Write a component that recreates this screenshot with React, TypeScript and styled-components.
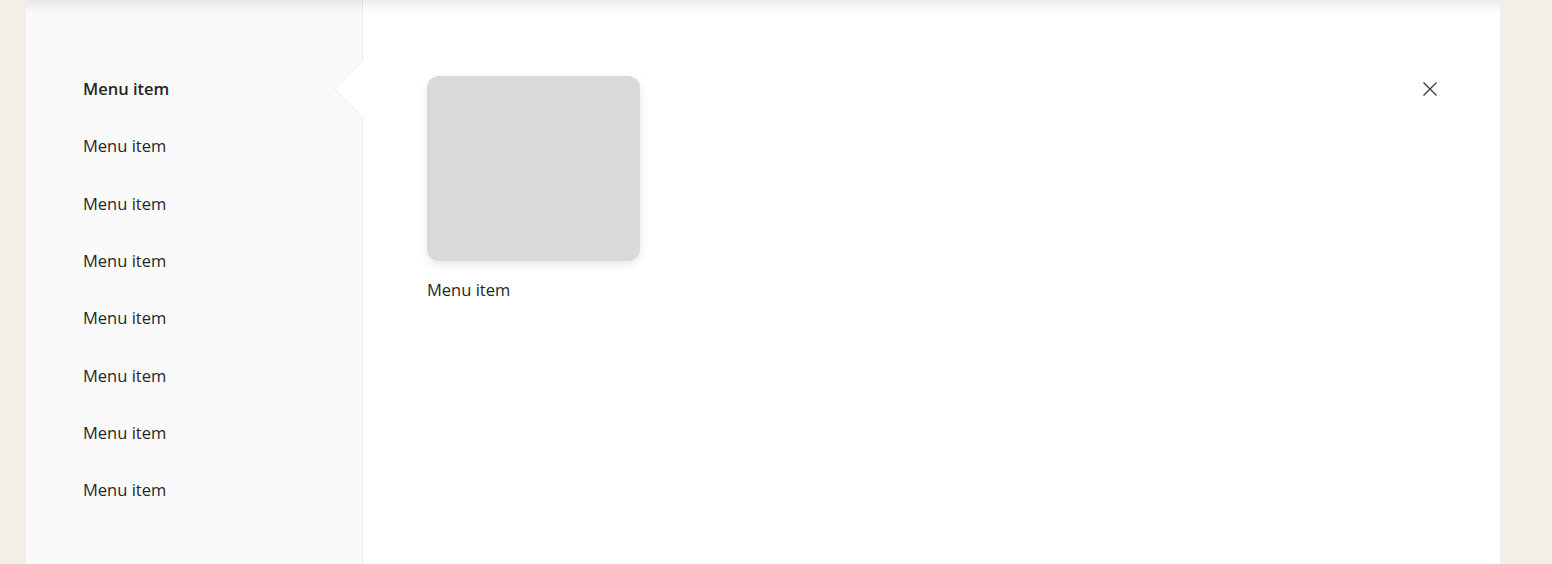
import React, { useState } from 'react';
import styled, { createGlobalStyle } from 'styled-components';

const GlobalStyle = createGlobalStyle`
  html, body {
    margin: 0;
    padding: 0;
    background: #f2efe8;
  }
  body {
    font-family: 'Open Sans', 'Noto Sans', sans-serif;
    color: #262626;
  }
`;

const Page = styled.div`
  height: 100vh;
  padding-left: 26px;
  box-sizing: border-box;
`;

const Panel = styled.div`
  position: relative;
  width: 1474px;
  height: 100%;
  background: #ffffff;
  display: flex;
  overflow: hidden;

  &::before {
    content: '';
    position: absolute;
    left: 0;
    right: 0;
    top: 0;
    height: 14px;
    background: linear-gradient(to bottom, rgba(0, 0, 0, 0.07), rgba(0, 0, 0, 0));
    pointer-events: none;
    z-index: 3;
  }
`;

const Sidebar = styled.nav`
  width: 336px;
  flex-shrink: 0;
  background: #fafafa;
  border-right: 1px solid #ece9e3;
  padding-top: 60px;
  display: flex;
  flex-direction: column;
`;

const SideBarItem = styled.div<{ selected?: boolean }>`
  position: relative;
  height: 57.3px;
  display: flex;
  align-items: center;
  padding-left: 57px;
  font-size: 16.5px;
  font-weight: ${({ selected }) => (selected ? 600 : 400)};
  cursor: pointer;
`;

const Notch = styled.svg`
  position: absolute;
  right: -1px;
  top: 0;
  width: 29px;
  height: 58px;
  z-index: 2;
`;

const Main = styled.main`
  flex: 1;
  display: flex;
  justify-content: space-between;
  align-items: flex-start;
  padding: 76px 62px 0 64px;
`;

const Tiles = styled.div`
  display: flex;
  gap: 24px;
`;

const Tile = styled.div`
  display: flex;
  flex-direction: column;
  gap: 17px;
`;

const Thumb = styled.div`
  width: 213px;
  height: 185px;
  border-radius: 12px;
  background: #d9d9d9;
  box-shadow: 0 3px 8px rgba(0, 0, 0, 0.1);
`;

const TileLabel = styled.span`
  font-size: 16.5px;
  line-height: 24px;
`;

const CloseButton = styled.button`
  border: none;
  background: none;
  padding: 0;
  margin-top: 5px;
  width: 16px;
  height: 16px;
  cursor: pointer;
  color: #333;
`;

const items = Array.from({ length: 8 }, () => 'Menu item');

const App = () => {
  const [selected, setSelected] = useState(0);

  return (
    <>
      <GlobalStyle />
      <Page>
        <Panel>
          <Sidebar>
            {items.map((label, i) => (
              <SideBarItem key={i} selected={selected === i} onClick={() => setSelected(i)}>
                {label}
                {selected === i && (
                  <Notch viewBox="0 0 29 58">
                    <polygon points="29,0 0,29 29,58" fill="#ffffff" />
                    <polyline points="29,0 0.5,29 29,58" fill="none" stroke="#ece9e3" strokeWidth="1" />
                  </Notch>
                )}
              </SideBarItem>
            ))}
          </Sidebar>
          <Main>
            <Tiles>
              <Tile>
                <Thumb />
                <TileLabel>Menu item</TileLabel>
              </Tile>
            </Tiles>
            <CloseButton aria-label="Close">
              <svg width="16" height="16" viewBox="0 0 16 16">
                <path d="M1.5 1.5 L14.5 14.5 M14.5 1.5 L1.5 14.5" stroke="currentColor" strokeWidth="1.2" fill="none" />
              </svg>
            </CloseButton>
          </Main>
        </Panel>
      </Page>
    </>
  );
};

export default App;
